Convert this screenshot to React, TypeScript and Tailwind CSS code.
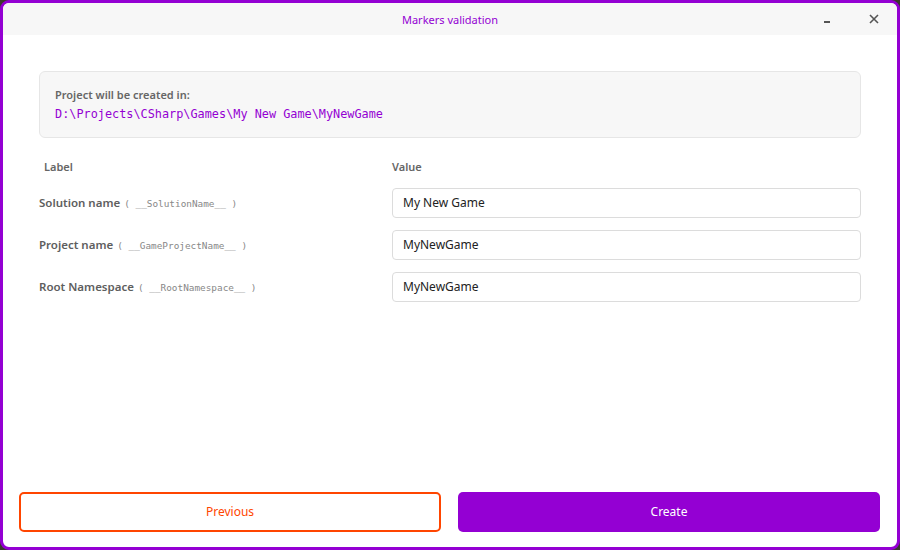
const sans = "font-['Noto_Sans','Open_Sans',sans-serif]";
const mono = "font-['DejaVu_Sans_Mono','Liberation_Mono',monospace]";

const fields = [
  { label: "Solution name", marker: "__SolutionName__", value: "My New Game" },
  { label: "Project name", marker: "__GameProjectName__", value: "MyNewGame" },
  { label: "Root Namespace", marker: "__RootNamespace__", value: "MyNewGame" },
];

export default function App() {
  return (
    <div className={`h-[550px] w-[900px] bg-[#3b3a2c] ${sans}`}>
      <div className="flex h-full w-full flex-col overflow-hidden rounded-[9px] border-[3px] border-[#9400d3] bg-white">
        {/* Title bar */}
        <div className="relative flex h-[32px] shrink-0 items-center justify-center bg-[#f7f7f7]">
          <span className="pt-[2px] text-[11px] text-[#9400d3]">Markers validation</span>
          <div className="absolute right-0 top-0 flex h-full items-center">
            <div className="flex h-full w-[48px] items-center justify-center pt-[6px]">
              <div className="h-[2px] w-[6px] bg-[#555]" />
            </div>
            <div className="flex h-full w-[46px] items-center justify-center">
              <svg width="10" height="10" viewBox="0 0 10 10">
                <path d="M1 1 L9 9 M9 1 L1 9" stroke="#555" strokeWidth="1.6" />
              </svg>
            </div>
          </div>
        </div>

        {/* Body */}
        <div className="flex flex-1 flex-col px-[36px] pt-[36px]">
          <div className="flex h-[67px] flex-col justify-center rounded-[6px] border border-[#e6e6e6] bg-[#f7f7f7] px-[15px]">
            <div className="text-[11px] font-semibold leading-[14px] text-[#666]">
              Project will be created in:
            </div>
            <div className={`mt-[5px] text-[11.85px] leading-[15px] text-[#9400d3] ${mono}`}>
              D:\Projects\CSharp\Games\My New Game\MyNewGame
            </div>
          </div>

          <div className="mt-[21px] flex text-[11px] font-semibold text-[#666]">
            <div className="w-[353px] pl-[5px]">Label</div>
            <div>Value</div>
          </div>

          <div className="mt-[12px] flex flex-col gap-[12px]">
            {fields.map((f) => (
              <div key={f.label} className="flex h-[30px] items-center">
                <div className="flex w-[353px] items-baseline">
                  <span className="text-[11.5px] font-semibold text-[#5e5e5e]">{f.label}</span>
                  <span className={`ml-[4px] text-[9.4px] text-[#888] ${mono}`}>
                    ( {f.marker} )
                  </span>
                </div>
                <div className="flex h-[30px] flex-1 items-center rounded-[4px] border border-[#dcdcdc] bg-white px-[10px] pt-[1px] text-[12px] text-[#222]">
                  {f.value}
                </div>
              </div>
            ))}
          </div>
        </div>

        {/* Footer buttons */}
        <div className="flex gap-[17px] pb-[15px] pl-[16px] pr-[17px]">
          <button className="flex h-[40px] w-[422px] items-center justify-center rounded-[5px] border-2 border-[#ff4500] bg-white text-[12px] text-[#ff4500]">
            Previous
          </button>
          <button className="flex h-[40px] w-[422px] items-center justify-center rounded-[5px] bg-[#9400d3] text-[12px] text-white">
            Create
          </button>
        </div>
      </div>
    </div>
  );
}
